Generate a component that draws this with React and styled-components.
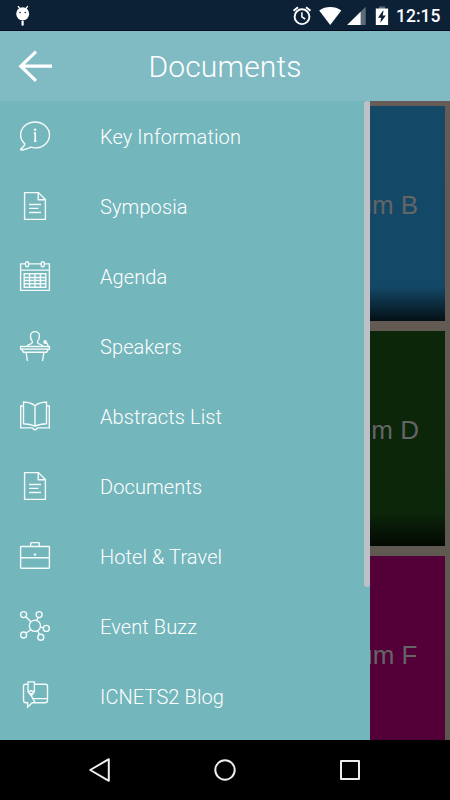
import React from "react";
import styled, { createGlobalStyle } from "styled-components";

const GlobalStyle = createGlobalStyle`
  * { box-sizing: border-box; }
  body { margin: 0; background: #000; overflow: hidden; }
`;

const Screen = styled.div`
  width: 450px;
  height: 800px;
  display: flex;
  flex-direction: column;
  overflow: hidden;
  font-family: Roboto, "Liberation Sans", sans-serif;
  color: #fff;
`;

const StatusBar = styled.div`
  height: 31px;
  flex: none;
  display: flex;
  align-items: center;
  justify-content: space-between;
  background: #0d2136;
  border-bottom: 1px solid #030a1b;
  padding: 2px 10px 0 15px;
`;

const StatusIcons = styled.div`
  display: flex;
  align-items: center;
`;

const Clock = styled.span`
  width: 44px;
  margin-left: 4px;
  font-size: 17.5px;
  font-weight: 500;
  line-height: 28px;
  white-space: nowrap;
`;

const Header = styled.header`
  height: 70px;
  flex: none;
  display: grid;
  grid-template-columns: 75px 1fr 75px;
  align-items: center;
  background: #80bbc3;
`;

const BackButton = styled.button`
  width: 75px;
  height: 70px;
  padding: 0;
  border: 0;
  background: none;
  display: block;
`;

const Title = styled.h1`
  margin: 0;
  font-size: 30px;
  font-weight: 300;
  line-height: 70px;
  padding-top: 1px;
  text-align: center;
  letter-spacing: 0.15px;
`;

const Content = styled.main`
  height: 639px;
  flex: none;
  display: grid;
  grid-template-columns: 450px;
  grid-template-rows: 639px;
  overflow: hidden;
`;

const TileColumn = styled.section`
  grid-area: 1 / 1;
  display: grid;
  grid-template-columns: 215px;
  grid-auto-rows: 215px;
  justify-content: end;
  gap: 10px;
  padding: 5px;
  background: linear-gradient(#665b56, #5d584f);
`;

const Tile = styled.div`
  display: flex;
  align-items: center;
  justify-content: center;
  padding: 0 0 16px 1px;
  color: #646566;
  font-family: "Liberation Sans", Arial, sans-serif;
  font-size: 26px;
  white-space: nowrap;
  background: linear-gradient(transparent 181px, rgba(0, 0, 0, 0.76) 214px), ${(p) => p.$color};
`;

const Drawer = styled.nav`
  grid-area: 1 / 1;
  width: 370px;
  height: 639px;
  display: flex;
  justify-content: space-between;
  background: #73b6bc;
  z-index: 1;
`;

const Menu = styled.ul`
  list-style: none;
  margin: 0;
  padding: 0;
  flex: 1;
`;

const MenuItem = styled.li`
  height: 70px;
  display: flex;
  align-items: center;
  gap: 50px;
  padding-left: 20px;
  font-size: 20px;
  font-weight: 300;
  letter-spacing: 0.1px;
`;

const MenuIcon = styled.svg`
  width: 30px;
  height: 30px;
  flex: none;
  fill: none;
  stroke: #f5fbfb;
  stroke-width: 1.4;
  overflow: visible;
`;

const Label = styled.span`
  line-height: 30px;
  padding-top: 1px;
`;

const ScrollThumb = styled.div`
  width: 6px;
  height: 486px;
  border-radius: 3px;
  background: #bec2c8;
`;

const NavBar = styled.footer`
  height: 60px;
  flex: none;
  display: flex;
  justify-content: center;
  align-items: center;
  gap: 101px;
  background: #000;
`;

const NavIcon = styled.svg`
  width: 24px;
  height: 24px;
  fill: none;
  stroke: #eee;
  stroke-width: 2;
  stroke-linejoin: round;
`;

const icons = {
  info: (
    <>
      <path d="M4.8 22.9C2 20.3.6 17.1.6 14C.6 6.8 7 1 15 1S29.5 6.8 29.5 14S23 26.9 15 26.9C13.5 26.9 12.3 26.7 10.8 26.2C8 27.5 4.5 29 1.1 29C.4 29 .4 28.2 1 27.7C3.2 26.1 4.7 24.6 4.8 22.9Z" />
      <path d="M13.8 12.2H15.2V20.4M14 20.1H16.4" strokeWidth="1.7" />
      <circle cx="15.1" cy="8.7" r=".9" fill="#fff" strokeWidth=".8" />
    </>
  ),
  document: (
    <>
      <path d="M4.6 1.6H18.5L25.4 8.5V28.4H4.6Z" />
      <path d="M18.2 1.8V8.8H25.2M9 13.5H21M9 17.4H18.5M9 21.5H21" />
    </>
  ),
  calendar: (
    <>
      <path d="M5.5 2.9H.6V29.4H29.4V2.9H24.3M8.6 2.9H21.1M.6 9.1H29.4" />
      <rect x="5.6" y=".8" width="3" height="5" rx="1.3" />
      <rect x="21.2" y=".8" width="3" height="5" rx="1.3" />
      <path d="M4.2 12.7H25.8V26.3H4.2ZM4.2 16.5H25.8M4.2 19.5H25.8M4.2 22.8H25.8M9.6 12.7V26.3M15 12.7V26.3M20.4 12.7V26.3" />
    </>
  ),
  speaker: (
    <>
      <path d="M7 15C7.6 13.4 11 13.4 12.2 11.8V10.2C10.7 8.5 10.3 6.5 10.5 4.5C10.9 1.5 13 .6 15 .6S19.1 1.5 19.4 4.5C19.5 6.5 19.1 8.8 17.6 10.2V11.8C18.8 13.4 22.2 13.4 22.8 15" />
      <rect x=".6" y="15.5" width="28.8" height="2.6" />
      <path d="M1.6 18.1L3.4 21.2H26.6L28.4 18.1" />
      <path d="M6 21.2L7.5 30M24 21.2L22.5 30" />
      <path d="M26.2 11.8C27.4 12.2 28 13.6 28 15.5" />
      <circle cx="25.1" cy="11" r="1.2" fill="#fff" />
    </>
  ),
  book: (
    <>
      <path d="M15 4.8C12 2.2 8 1.2 3.5 1V22.7C8 22.9 12 23.7 15 25.2C18 23.7 22 22.9 26.5 22.7V1C22 1.2 18 2.2 15 4.8ZM15 4.8V25.2" />
      <path d="M3.4 5H.7V26.9H12C13.2 26.9 13.4 28.8 15 28.8S16.8 26.9 18 26.9H29.3V5H26.6" />
    </>
  ),
  briefcase: (
    <>
      <rect x=".6" y="5.5" width="28.8" height="21.7" rx=".6" />
      <path d="M10.7 5.5V2.2C10.7 1.8 11 1.6 11.4 1.6H18.6C19 1.6 19.3 1.8 19.3 2.2V5.5M.6 16.7H29.4" />
      <circle cx="15" cy="13.6" r=".9" fill="#fff" strokeWidth=".8" />
    </>
  ),
  network: (
    <>
      <circle cx="14.9" cy="14.8" r="5.6" />
      <circle cx="3.6" cy="3.6" r="3" />
      <circle cx="19.1" cy="3.6" r="3" />
      <circle cx="26.3" cy="17.4" r="3" />
      <circle cx="20.8" cy="26.3" r="3" />
      <circle cx="3.6" cy="24" r="3" />
      <path d="M5.8 5.8L10.8 10.8M18 6.5L16.9 9.4M20.4 16.1L23.3 16.7M17.7 19.8L19.4 23.5M10.7 18.9L6 22" />
    </>
  ),
  blog: (
    <>
      <path d="M7.8 3.2H5.6C4.2 3.2 3.5 4 3.5 5.3V19C3.5 20.7 4.4 21.8 6 21.8H7.6V26.2L12.2 21.8H25C26.7 21.8 27.5 20.9 27.5 19.3V5.3C27.5 4 26.7 3.2 25.3 3.2H14.7" />
      <path d="M8 .9H14.4V10.6L11.3 14.6L8 10.8ZM8.2 9.8L9.6 10.6L11.2 9.6L12.8 10.6L14.2 9.8M11.3 14.6L15 21.5M13.2 17.6H27.4" />
      <path d="M9.8 12.6H12.8L11.3 14.6Z" fill="#fff" />
    </>
  ),
};

const menuItems = [
  { label: "Key Information", icon: "info" },
  { label: "Symposia", icon: "document" },
  { label: "Agenda", icon: "calendar" },
  { label: "Speakers", icon: "speaker" },
  { label: "Abstracts List", icon: "book" },
  { label: "Documents", icon: "document" },
  { label: "Hotel & Travel", icon: "briefcase" },
  { label: "Event Buzz", icon: "network" },
  { label: "ICNETS2 Blog", icon: "blog" },
];

const tiles = [
  { name: "B", color: "#134866" },
  { name: "D", color: "#0c260a" },
  { name: "F", color: "#530039" },
];

export default function App() {
  return (
    <Screen>
      <GlobalStyle />
      <StatusBar>
        <svg width="16" height="22" viewBox="0 0 16 22">
          <path d="M3 1.2L5.2 4M12.8 1.2L10.6 4" stroke="#fff" strokeWidth="1.3" />
          <circle cx="7.7" cy="8.8" r="6.5" fill="#fff" />
          <circle cx="5" cy="7.5" r=".8" fill="#0d2136" />
          <circle cx="10.3" cy="7.5" r=".8" fill="#0d2136" />
          <rect x="6.5" y="15.5" width="2.2" height="5.3" rx="1" fill="#fff" />
        </svg>
        <StatusIcons>
          <svg width="131" height="22" viewBox="0 0 131 22">
            <g fill="none" stroke="#fff" strokeWidth="1.9">
              <circle cx="41" cy="11.7" r="7.4" />
              <path d="M40.9 7.2V11.9L44.2 14" strokeWidth="1.5" />
              <path d="M32.5 5.8L37 2.2M49.5 5.8L45 2.2" />
            </g>
            <path d="M58.2 5.4C64.5.9 74 .9 80.3 5.4L69.2 20Z" fill="#fff" />
            <path d="M104.7 1.8V20H86.2Z" fill="#5d6c7b" />
            <path d="M99.6 6.8V20H86.2Z" fill="#fff" />
            <rect x="118" y="1.5" width="6" height="3" fill="#596979" />
            <path d="M114.8 3.5H127.1V20H114.8Z" fill="#fff" />
            <path d="M121.9 5.7L117 12.7H120.2L119.2 18L124.9 10.4H121.6L122.6 5.7Z" fill="#0d2136" />
          </svg>
          <Clock>12:15</Clock>
        </StatusIcons>
      </StatusBar>
      <Header>
        <BackButton aria-label="Back">
          <svg width="75" height="70" viewBox="0 0 75 70" fill="none" stroke="#fff" strokeWidth="3.2">
            <path d="M52 34.2H21M36 19.6L20.8 34.2L36 48.8" />
          </svg>
        </BackButton>
        <Title>Documents</Title>
      </Header>
      <Content>
        <TileColumn>
          {tiles.map((t) => (
            <Tile key={t.name} $color={t.color}>
              Symposium {t.name}
            </Tile>
          ))}
        </TileColumn>
        <Drawer>
          <Menu>
            {menuItems.map((item) => (
              <MenuItem key={item.label}>
                <MenuIcon viewBox="0 0 30 30">{icons[item.icon]}</MenuIcon>
                <Label>{item.label}</Label>
              </MenuItem>
            ))}
          </Menu>
          <ScrollThumb />
        </Drawer>
      </Content>
      <NavBar>
        <NavIcon viewBox="0 0 24 24">
          <path d="M20.8 1.2V22.8L2.2 12Z" />
        </NavIcon>
        <NavIcon viewBox="0 0 24 24">
          <circle cx="12" cy="12" r="9.7" />
        </NavIcon>
        <NavIcon viewBox="0 0 24 24">
          <rect x="3" y="3" width="18" height="18" />
        </NavIcon>
      </NavBar>
    </Screen>
  );
}
